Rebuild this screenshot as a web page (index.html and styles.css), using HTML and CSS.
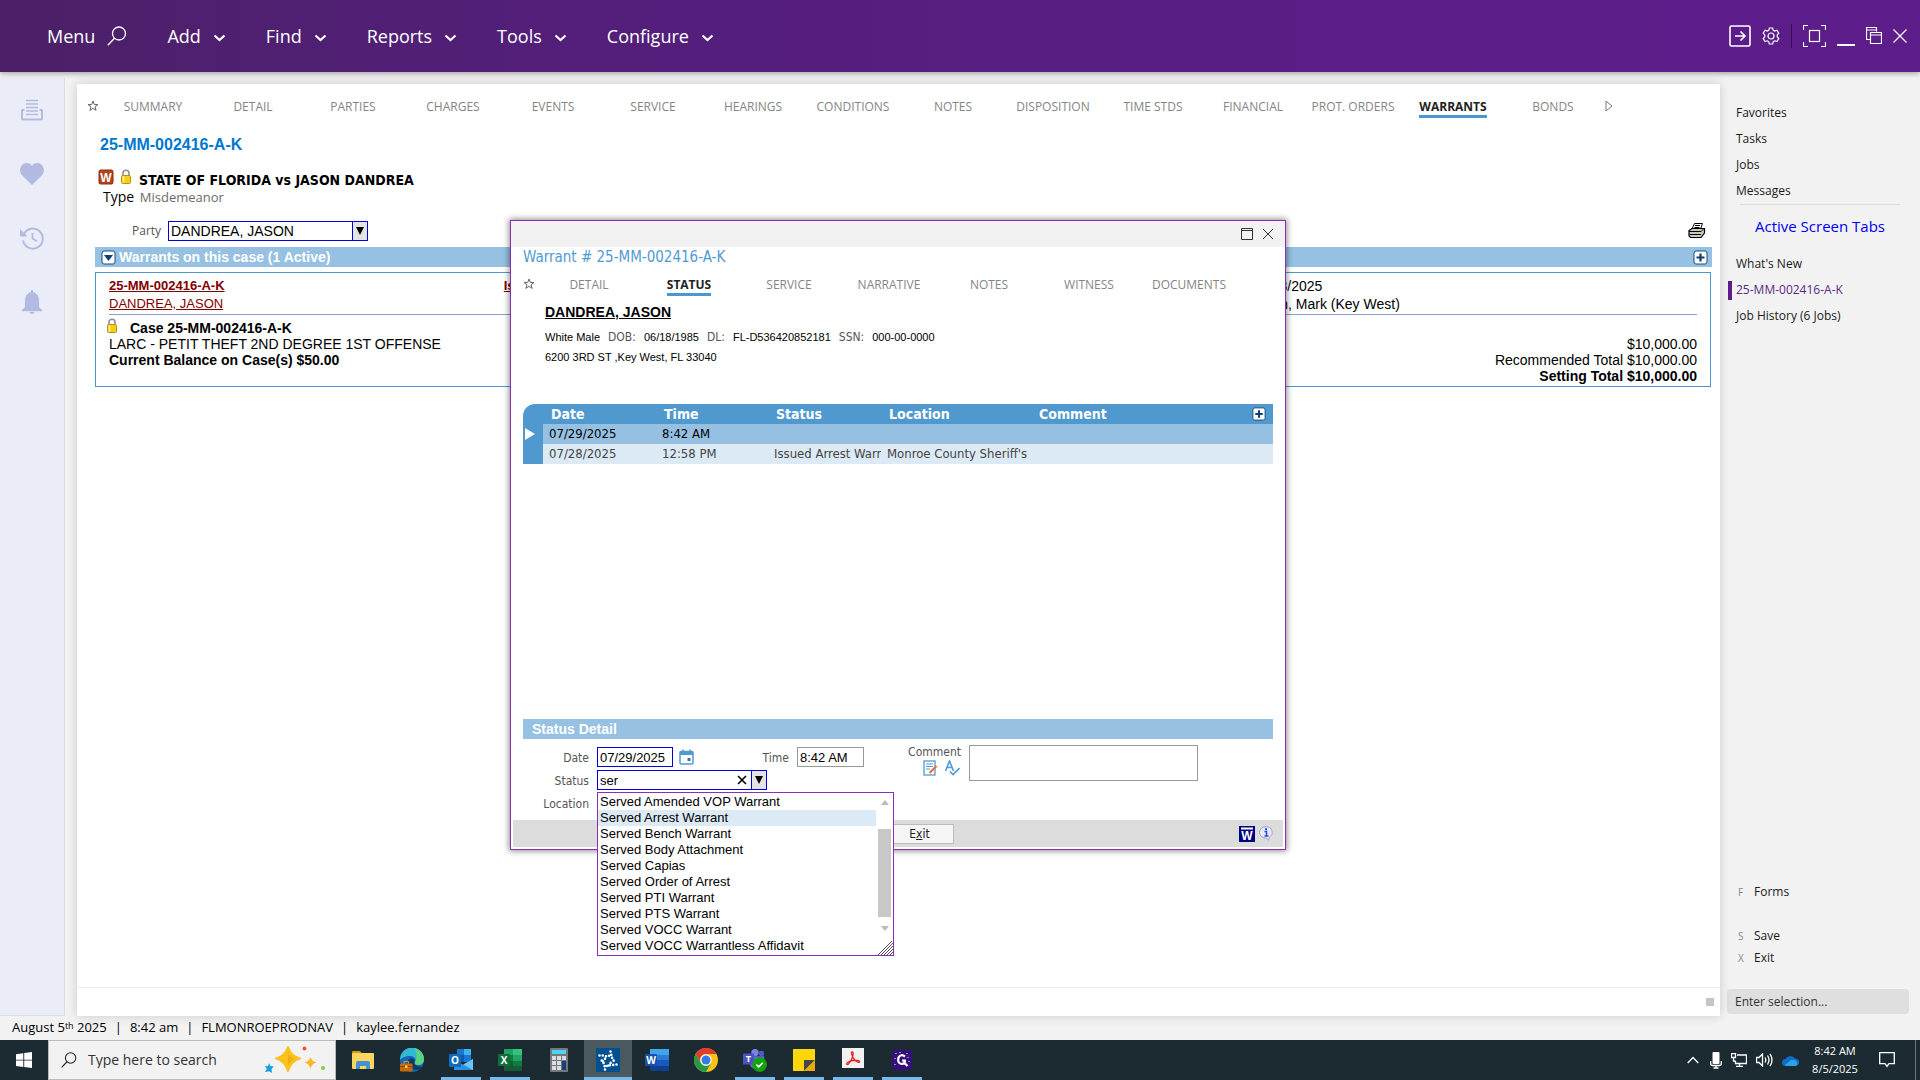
FILE: index.html
```html
<!DOCTYPE html>
<html lang="en">
<head>
<meta charset="utf-8">
<title>25-MM-002416-A-K</title>
<link rel="stylesheet" href="styles.css">
</head>
<body>
<svg class="defs" aria-hidden="true">
  <symbol id="chevron" viewBox="0 0 13 8"><path d="M1.5 1.5l5 4.500 5-4.500" fill="none" stroke="currentColor" stroke-width="2.200"/></symbol>
  <symbol id="glass" viewBox="0 0 20 20"><circle cx="12" cy="7.500" r="6.500" fill="none" stroke="currentColor" stroke-width="1.300"/><path d="M7.500 12.200L.8 19.200" stroke="currentColor" stroke-width="1.400"/></symbol>
  <symbol id="star" viewBox="0 0 12 12"><path d="M6 1l1.300 3.500 3.600.1-2.900 2.200 1.100 3.600L6 8.300l-3.100 2.100L4 6.800 1.100 4.600l3.600-.1z" fill="none" stroke="#666"/></symbol>
  <symbol id="lock" viewBox="0 0 12 15"><path d="M3 8V4.200a3 3 0 0 1 6 0V8" fill="none" stroke="#8a8f96" stroke-width="1.600"/><rect x="1.500" y="6.500" width="9" height="8" rx="1" fill="#f3cf1c" stroke="#b8920c"/><path d="M3.500 7.500v6" stroke="#fff6a8" stroke-width="1.500"/></symbol>
  <symbol id="plus" viewBox="0 0 15 15"><rect x="1" y="1" width="13" height="13" rx="2" fill="#fff" stroke="#1d4f7c"/><path d="M7.500 3.500v8M3.500 7.500h8" stroke="#0d3f70" stroke-width="2.200"/></symbol>
</svg>

<header class="topbar">
  <nav class="menu" aria-label="Main">
    <button type="button">Menu <svg class="i-glass"><use href="#glass"/></svg></button>
    <button type="button">Add <svg class="i-chev"><use href="#chevron"/></svg></button>
    <button type="button">Find <svg class="i-chev"><use href="#chevron"/></svg></button>
    <button type="button">Reports <svg class="i-chev"><use href="#chevron"/></svg></button>
    <button type="button">Tools <svg class="i-chev"><use href="#chevron"/></svg></button>
    <button type="button">Configure <svg class="i-chev"><use href="#chevron"/></svg></button>
  </nav>
  <div class="window-tools">
    <button type="button" aria-label="Sign out"><svg width="22" height="22" viewBox="0 0 22 22"><rect x="1" y="1" width="20" height="20" rx="1.500" stroke-width="1.600"/><path d="M6 11h10M11.500 6.500L16 11l-4.500 4.500" stroke-width="1.600"/></svg></button>
    <button type="button" aria-label="Settings"><svg width="18" height="18" viewBox="0 0 18 18"><path d="M7.300 1h3.400l.5 2.300 1.500.8 2.200-.9 1.900 3-1.600 1.700v1.900l1.600 1.800-1.900 3-2.200-.8-1.500.8-.5 2.400H7.300l-.5-2.400-1.500-.8-2.200.8-1.900-3 1.600-1.800V7.900L1.200 6.200l1.900-3 2.200.9 1.500-.8z"/><circle cx="9" cy="9" r="3"/></svg></button>
    <span class="tool-rule"></span>
    <button type="button" aria-label="Focus"><svg width="23" height="22" viewBox="0 0 23 22"><path d="M.5 5V.5H5M18 .5h4.500V5M.5 17v4.500H5M18 21.500h4.500V17"/><rect x="6.500" y="5.500" width="10" height="11"/></svg></button>
    <button type="button" aria-label="Minimize"><svg width="18" height="22" viewBox="0 0 18 22"><path d="M0 20h18" stroke-width="2"/></svg></button>
    <button type="button" aria-label="Restore"><svg width="16" height="18" viewBox="0 0 16 18"><path d="M4.500 12.500h-4V.5h10v4M.5 3h10M4.500 5.500h11v11h-11zM4.500 8h11"/></svg></button>
    <button type="button" aria-label="Close"><svg width="14" height="14" viewBox="0 0 14 14"><path d="M.5.5l13 13M13.500.5l-13 13"/></svg></button>
  </div>
</header>

<div class="shell">
  <nav class="rail" aria-label="Shortcuts">
    <button type="button" aria-label="Queue"><svg width="22" height="22" viewBox="0 0 22 22"><path d="M5 1.500h12M5 5h12M5 8.500h12M5 12h12M5 15.500h12" stroke-width="1.700"/><path d="M1 10.500V19q0 1.500 1.500 1.500h17Q21 20.500 21 19v-8.500M1 11h2.500M21 11h-2.500" stroke-width="2"/></svg></button>
    <button type="button" aria-label="Favorites"><svg width="24" height="22" viewBox="0 0 24 22"><path class="fill" d="M12 22L2.200 12.500C-2.500 7 1.500 0 6.600 0 9 0 11 1.200 12 3c1-1.800 3-3 5.400-3C22.500 0 26.500 7 21.800 12.500z"/></svg></button>
    <button type="button" aria-label="History"><svg width="24" height="24" viewBox="0 0 24 24"><path d="M3.700 8.500A10 10 0 1 1 3 14.500" stroke-width="2"/><path class="fill" d="M0 3v7.500h7.500z"/><path d="M12.500 7v5.500l4.500 2.700" stroke-width="1.800"/></svg></button>
    <button type="button" aria-label="Notifications"><svg width="22" height="24" viewBox="0 0 22 24"><path class="fill" d="M10 0h2v2.300c4 .6 6 4 6 8V17l3 3v1.200H1V20l3-3v-6.700c0-4 2-7.400 6-8zM8.500 22h5a2.500 2 0 0 1-5 0z"/></svg></button>
  </nav>

  <main class="card">
    <nav class="tabs" aria-label="Case">
      <svg class="i-star"><use href="#star"/></svg>
      <ul>
        <li><a href="#">SUMMARY</a></li><li><a href="#">DETAIL</a></li><li><a href="#">PARTIES</a></li><li><a href="#">CHARGES</a></li><li><a href="#">EVENTS</a></li><li><a href="#">SERVICE</a></li><li><a href="#">HEARINGS</a></li><li><a href="#">CONDITIONS</a></li><li><a href="#">NOTES</a></li><li><a href="#">DISPOSITION</a></li><li><a href="#">TIME STDS</a></li><li><a href="#">FINANCIAL</a></li><li><a href="#">PROT. ORDERS</a></li><li><a href="#" class="current">WARRANTS</a></li><li><a href="#">BONDS</a></li>
      </ul>
      <button type="button" aria-label="More tabs"><svg width="8" height="12" viewBox="0 0 8 12"><path d="M1 1v10l6-5z" fill="none" stroke="#777"/></svg></button>
    </nav>

    <div class="case">
      <h1>25-MM-002416-A-K</h1>
      <div class="style-line">
        <svg width="16" height="16" viewBox="0 0 16 16"><rect x="1" y="1" width="14" height="14" rx="1.500" fill="#b3431a" stroke="#8a2f10"/><text x="8" y="12.500" text-anchor="middle" class="t-icon">W</text></svg>
        <svg width="12" height="15"><use href="#lock"/></svg>
        <h2>STATE OF FLORIDA vs JASON DANDREA</h2>
      </div>
      <p class="type">Type <span>Misdemeanor</span></p>
      <div class="party">
        <label for="party">Party</label>
        <div class="select-box">
          <select id="party"><option>DANDREA, JASON</option></select>
          <span class="drop-arrow" aria-hidden="true"></span>
        </div>
        <button type="button" class="print" aria-label="Print"><svg width="18" height="16" viewBox="0 0 18 16"><path d="M4 6l2.500-5.500h8L12.500 6" fill="#fff" stroke="#000"/><path d="M7 2.500h5M6.500 4.500h5" stroke="#000"/><path d="M1 7.500l3-2h12.500v4.500l-3.500 4.500H2.500L1 13z" fill="#c8c8c8" stroke="#000" stroke-width="1.200"/><path d="M1 8.500h12l3-3M1.500 11.500H13" fill="none" stroke="#000"/><path d="M8 10h3" stroke="#e8d800"/></svg></button>
      </div>

      <section>
        <div class="section-bar">
          <button type="button" aria-label="Collapse"><svg width="15" height="15" viewBox="0 0 15 15"><rect x="1" y="1" width="13" height="13" rx="2" fill="#fff" stroke="#1d4f7c"/><path d="M3 5h9l-4.500 6z" fill="#0d3f70"/></svg></button>
          <h3>Warrants on this case (1 Active)</h3>
          <button type="button" aria-label="Add warrant"><svg width="15" height="15"><use href="#plus"/></svg></button>
        </div>
        <div class="warrant">
          <div class="warrant-head">
            <div><a href="#"><b>25-MM-002416-A-K</b></a><br><a href="#">DANDREA, JASON</a></div>
            <div><a href="#"><b>Issued</b></a></div>
            <div class="issued"><p>07/28/2025</p><p class="judge">n, Mark (Key West)</p></div>
          </div>
          <div class="warrant-body">
            <div>
              <div class="case-line"><svg width="12" height="15"><use href="#lock"/></svg><b>Case 25-MM-002416-A-K</b></div>
              <div>LARC - PETIT THEFT 2ND DEGREE 1ST OFFENSE</div>
              <div><b>Current Balance on Case(s) $50.00</b></div>
            </div>
            <div class="totals">
              <div>$10,000.00</div>
              <div>Recommended Total $10,000.00</div>
              <div><b>Setting Total $10,000.00</b></div>
            </div>
          </div>
        </div>
      </section>
    </div>
    <div class="card-foot"><span class="grip"></span></div>

    <div class="dialog" role="dialog" aria-labelledby="dlg-title">
      <div class="dialog-bar">
        <button type="button" aria-label="Maximize"><svg width="12" height="12" viewBox="0 0 12 12"><path d="M.5.500h11v11H.5zM.5 2.500h11"/></svg></button>
        <button type="button" aria-label="Close"><svg width="12" height="12" viewBox="0 0 12 12"><path d="M1 1l10 10M11 1L1 11"/></svg></button>
      </div>
      <div class="dialog-body">
        <h2 id="dlg-title">Warrant # 25-MM-002416-A-K</h2>
        <nav class="tabs dialog-tabs" aria-label="Warrant">
          <svg class="i-star"><use href="#star"/></svg>
          <ul><li><a href="#">DETAIL</a></li><li><a href="#" class="current">STATUS</a></li><li><a href="#">SERVICE</a></li><li><a href="#">NARRATIVE</a></li><li><a href="#">NOTES</a></li><li><a href="#">WITNESS</a></li><li><a href="#">DOCUMENTS</a></li></ul>
        </nav>
        <div class="person">
          <p class="name"><a href="#">DANDREA, JASON</a></p>
          <p class="facts"><span>White Male</span> <i>DOB:</i> <span>06/18/1985</span> <i>DL:</i> <span>FL-D536420852181</span> <i>SSN:</i> <span>000-00-0000</span></p>
          <p class="address">6200 3RD ST ,Key West, FL 33040</p>
        </div>
        <div class="grid-area">
          <table>
            <colgroup><col class="c-sel"><col class="c-date"><col class="c-time"><col class="c-stat"><col class="c-loc"><col></colgroup>
            <thead><tr><th></th><th>Date</th><th>Time</th><th>Status</th><th>Location</th><th><div class="last-head">Comment <button type="button" aria-label="Add status"><svg width="14" height="14"><use href="#plus"/></svg></button></div></th></tr></thead>
            <tbody>
              <tr class="selected"><td><svg width="10" height="14" viewBox="0 0 10 14"><path d="M0 1l10 6-10 6z" fill="#fff"/></svg></td><td>07/29/2025</td><td>8:42 AM</td><td></td><td></td><td></td></tr>
              <tr><td></td><td>07/28/2025</td><td>12:58 PM</td><td>Issued Arrest Warrant</td><td>Monroe County Sheriff's Office</td><td></td></tr>
            </tbody>
          </table>
        </div>
        <h3 class="detail-bar">Status Detail</h3>
        <form class="detail">
          <div class="fields">
            <div class="row">
              <label for="date">Date</label>
              <input id="date" class="required w-date" value="07/29/2025">
              <button type="button" aria-label="Pick date" class="cal"><svg width="15" height="16" viewBox="0 0 15 16"><path d="M1 3.500q0-1 1-1h11q1 0 1 1V14q0 1-1 1H2q-1 0-1-1zM4 .5V3M11 .5V3" fill="#fff" stroke="#4f9bd3" stroke-width="1.500"/><path d="M1 3h13v3H1z" fill="#4f9bd3"/><path d="M8.500 9h3v3h-3z" fill="#2d78b5"/></svg></button>
              <label for="time" class="time-label">Time</label>
              <input id="time" class="w-time" value="8:42 AM">
            </div>
            <div class="row">
              <label for="status">Status</label>
              <div class="combo">
                <input id="status" value="ser" role="combobox" aria-expanded="true" aria-controls="status-list">
                <button type="button" class="clear" aria-label="Clear"><svg width="10" height="10" viewBox="0 0 10 10"><path d="M1 1l8 8M9 1L1 9" stroke="#000" stroke-width="1.600"/></svg></button>
                <button type="button" class="drop-arrow" aria-label="Open list"></button>
                <div class="list-box">
                  <ul id="status-list" role="listbox">
                    <li role="option">Served Amended VOP Warrant</li>
                    <li role="option" aria-selected="true">Served Arrest Warrant</li>
                    <li role="option">Served Bench Warrant</li>
                    <li role="option">Served Body Attachment</li>
                    <li role="option">Served Capias</li>
                    <li role="option">Served Order of Arrest</li>
                    <li role="option">Served PTI Warrant</li>
                    <li role="option">Served PTS Warrant</li>
                    <li role="option">Served VOCC Warrant</li>
                    <li role="option">Served VOCC Warrantless Affidavit</li>
                  </ul>
                  <div class="scroll">
                    <span class="up"></span><span class="thumb"></span><span class="down"></span>
                    <svg width="15" height="14" viewBox="0 0 15 14"><path d="M0 14L14 0M3 14L15 2M6 14l9-9M9 14l6-6M12 14l3-3" stroke="#555"/></svg>
                  </div>
                </div>
              </div>
            </div>
            <div class="row"><label>Location</label></div>
          </div>
          <div class="comment-side">
            <label for="comment">Comment</label>
            <div class="comment-icons">
              <svg width="15" height="16" viewBox="0 0 15 16"><rect x="1" y="1" width="11" height="14" fill="#fff" stroke="#4f9bd3" stroke-width="1.300"/><path d="M3 4h7M3 6.500h7M3 9h4" stroke="#4f9bd3"/><path d="M6.500 13L13.500 6" stroke="#e8702a" stroke-width="2.200"/></svg>
              <svg width="16" height="16" viewBox="0 0 16 16"><path d="M1.500 11L5.500 1l4 10M3 7.500h5M6 11.500l3 3L15.500 8" fill="none" stroke="#4f9bd3" stroke-width="1.600"/></svg>
            </div>
          </div>
          <textarea id="comment"></textarea>
        </form>
      </div>
      <div class="dialog-foot">
        <button type="button" class="exit">E<u>x</u>it</button>
        <div class="foot-icons">
          <svg width="16" height="16" viewBox="0 0 16 16"><rect width="16" height="16" fill="#000080"/><path d="M2 2.500h12" stroke="#fff" stroke-width="2"/><text x="8" y="14" text-anchor="middle" class="t-icon">W</text></svg>
          <svg width="14" height="15" viewBox="0 0 14 15"><path d="M7 .7a6 5.700 0 0 1 3.500 10.500L9.500 14.500 7.500 12A6 5.700 0 1 1 7 .7z" fill="#e9e9fa" stroke="#a3a3cc"/><path d="M5.500 5.500H7.500V10M5.500 10h4" fill="none" stroke="#1b4fd0" stroke-width="1.500"/><circle cx="7" cy="3.200" r="1.100" fill="#1b4fd0"/></svg>
        </div>
      </div>
    </div>
  </main>

  <aside class="side">
    <ul class="links">
      <li><a href="#">Favorites</a></li><li><a href="#">Tasks</a></li><li><a href="#">Jobs</a></li><li><a href="#">Messages</a></li>
    </ul>
    <h2>Active Screen Tabs</h2>
    <ul class="links">
      <li><a href="#">What's New</a></li><li class="on"><a href="#">25-MM-002416-A-K</a></li><li><a href="#">Job History (6 Jobs)</a></li>
    </ul>
    <ul class="actions">
      <li class="apart"><kbd>F</kbd><a href="#">Forms</a></li><li><kbd>S</kbd><a href="#">Save</a></li><li><kbd>X</kbd><a href="#">Exit</a></li>
    </ul>
    <input class="selection" placeholder="Enter selection..." aria-label="Enter selection">
  </aside>
</div>

<footer class="statusline"><span>August 5<sup>th</sup> 2025</span><span>|</span><span>8:42 am</span><span>|</span><span>FLMONROEPRODNAV</span><span>|</span><span>kaylee.fernandez</span></footer>

<div class="taskbar">
  <button type="button" class="start" aria-label="Start"><svg width="16" height="16" viewBox="0 0 16 16"><path d="M0 2.200L7.300 1.200v6.500H0zM8.200 1L16 0v7.700H8.200zM0 8.500h7.300V15L0 14zM8.200 8.500H16V16l-7.800-1z" fill="#fff"/></svg></button>
  <div class="search">
    <svg class="s-glass"><use href="#glass"/></svg>
    <input placeholder="Type here to search" aria-label="Type here to search">
    <svg width="62" height="28" viewBox="0 0 62 28"><path d="M24 1q3 9 12 11.500Q27 15 24 25q-3-10-12-12.500Q21 10 24 1z" fill="#fbc21c" stroke="#fbc21c" stroke-width="2" stroke-linejoin="round"/><path d="M24 6q1 6 7 6.500Q26 14 24 20z" fill="#eeb010"/><path d="M46.500 11q1.500 4.500 6 5.500-4.500 1-6 6-1.500-5-6-6 4.500-1 6-5.500z" fill="#fbb62a"/><path d="M5 17l1.500 3 3.300.5-2.300 2.500.5 4-3-1.700-4 1 1.800-3.500L1 20l3 .3z" fill="#1b9de2"/><circle cx="40.500" cy="2.500" r="2" fill="#ef5a2b"/><circle cx="59" cy="22" r="2" fill="#86c940"/></svg>
  </div>
  <div class="apps">
    <button type="button" aria-label="File Explorer"><svg viewBox="0 0 24 24"><path d="M1 4q0-1 1-1h7l2 2.500H1z" fill="#d99a0c"/><rect x="1" y="5" width="22" height="16" rx="1" fill="#ffd561"/><path d="M5 21v-6q0-2 2-2h10q2 0 2 2v6h-4v-3H9v3z" fill="#3f93d6"/></svg></button>
    <button type="button" aria-label="Edge"><svg viewBox="0 0 24 24"><circle cx="12" cy="12" r="12" fill="#1467b8"/><path d="M0 12A12 12 0 0 1 24 11c0 4-3 6-6 6-3 0-5-1-3-3 2-3-1-6-5-6S1 10 0 12z" fill="#31b9d3"/><path d="M14 0q10 3 10 11c0 4-3 6-6 6-3 0-4-1-3-3 3-5 2-10-1-14z" fill="#5bd47b"/><path d="M7.500 15q0-4 4-5 4 1 3 4-1 4 8 5-3 3-6 3-8 0-9-7z" fill="#123a66"/><rect y="15.500" width="12.500" height="8" rx="1" fill="#c76a06"/><path d="M0 18.500h12.500" stroke="#8d4302"/><path d="M4 15.500v-2h4.500v2" fill="none" stroke="#e6932c"/><rect x="5" y="17.500" width="2.500" height="2.500" fill="#ffd25a"/></svg></button>
    <button type="button" aria-label="Outlook" class="open"><svg viewBox="0 0 24 24"><path d="M8 1h14v13H8z" fill="#1a77cf"/><path d="M15 1h7v6h-7z" fill="#3eb5f0"/><path d="M8 7h7v7H8z" fill="#0f5aa8"/><path d="M5 12l10 5 9-6v11H5z" fill="#2a93e0"/><path d="M24 11v11L14 16.500z" fill="#6cc3f4"/><rect y="6" width="12" height="13" rx="1" fill="#0f6cbd"/><text x="6" y="16" text-anchor="middle" class="t-app">O</text></svg></button>
    <button type="button" aria-label="Excel" class="open"><svg viewBox="0 0 24 24"><rect x="6" y="1" width="18" height="22" rx="1" fill="#185c37"/><path d="M6 1h9v6H6z" fill="#21a366"/><path d="M15 1h9v6h-9z" fill="#33c481"/><path d="M15 7h9v6h-9z" fill="#21a366"/><path d="M6 7h9v6H6zM15 13h9v5h-9z" fill="#107c41"/><rect y="6" width="12" height="12" rx="1" fill="#0e7038"/><text x="6" y="15.500" text-anchor="middle" class="t-app">X</text></svg></button>
    <button type="button" aria-label="Calculator"><svg viewBox="0 0 24 24"><rect x="3" width="18" height="24" rx="1" fill="#74787c"/><rect x="5" y="2" width="14" height="4" fill="#4bd4f4"/><path d="M5 8h4v4H5zM10 8h4v4h-4zM15 8h4v4h-4zM5 13h4v4H5zM10 13h4v4h-4zM5 18h4v4H5zM10 18h4v4h-4z" fill="#d9dcde"/><rect x="15" y="13" width="4" height="9" fill="#15407c"/></svg></button>
    <button type="button" aria-label="Case navigator" class="open active"><svg viewBox="0 0 24 24"><rect width="24" height="24" fill="#00508f"/><path d="M14.500 3.500l1 4 1 4 3 3M3.500 7.500h3.500l4 1 4-1.500M9 21.500l-.5-4-1.500-4L3.500 11M20.500 16.500l-4 .5-4 .5-3.500 1M7 13.500l3-4M12.500 17.500l4-5" fill="none" stroke="#fff" stroke-width="2.600" stroke-linecap="round" stroke-dasharray="0 3.300"/></svg></button>
    <button type="button" aria-label="Word"><svg viewBox="0 0 24 24"><rect x="5" y="1" width="19" height="22" rx="1" fill="#103f91"/><path d="M5 1h19v6H5z" fill="#41a5ee"/><path d="M5 7h19v5H5z" fill="#2b7cd3"/><path d="M5 12h19v6H5z" fill="#185abd"/><rect y="6" width="12" height="12" rx="1" fill="#1651ad"/><text x="6" y="15.500" text-anchor="middle" class="t-app">W</text></svg></button>
    <button type="button" aria-label="Chrome"><svg viewBox="0 0 24 24"><circle cx="12" cy="12" r="12" fill="#fbc116"/><path d="M1.600 6A12 12 0 0 1 22.400 6H12a6 6 0 0 0-5.200 9z" fill="#e33b2e"/><path d="M1.600 6A12 12 0 0 0 12 24l5.200-9A6 6 0 0 1 6.800 15z" fill="#229a48"/><circle cx="12" cy="12" r="5.700" fill="#fff"/><circle cx="12" cy="12" r="4.500" fill="#2f7de9"/></svg></button>
    <button type="button" aria-label="Teams" class="open"><svg viewBox="0 0 26 26"><circle cx="13" cy="5" r="4" fill="#7b83eb"/><circle cx="20" cy="6" r="3" fill="#5059c9"/><path d="M7 9h16v8q-2 6-8 6-8 0-8-8z" fill="#6169d6"/><rect y="6" width="12" height="12" rx="1" fill="#4b53bc"/><text x="6" y="15.500" text-anchor="middle" class="t-app">T</text><circle cx="18" cy="18" r="8" fill="#13a10e"/><path d="M14.500 18l2.500 2.500 4.500-4.500" fill="none" stroke="#fff" stroke-width="1.800"/></svg></button>
    <button type="button" aria-label="Sticky Notes" class="open"><svg viewBox="0 0 24 24"><path d="M1 1h22v22H1z" fill="#ffd60a"/><path d="M12 12h11L12 23z" fill="#454545"/><path d="M23 12v11H12z" fill="#e9a90b"/></svg></button>
    <button type="button" aria-label="Acrobat" class="open"><svg viewBox="0 0 24 24"><path d="M1 0h22v20H1z" fill="#f2f2f2"/><path d="M10.500 4c2-1 2 2 1 5-1 3-4 8-5.500 7.500-1.500-1 2-3.500 6-4 3.500-.5 7 0 6.500 1.500-.6 1.500-4-1-5.500-3-1.500-2-3-6-2.500-7z" fill="none" stroke="#e32626" stroke-width="1.300"/></svg></button>
    <button type="button" aria-label="Capture" class="open"><svg viewBox="0 0 24 24"><rect x="2" y="2" width="20" height="20" rx="4" fill="#341078"/><path d="M15 8.500q-4-3-6.500 1Q7 15 11.500 16q3.500 0 3.500-3.500h-3M14.500 15l3 3" fill="none" stroke="#fff" stroke-width="2.200"/><path d="M6 5v1M10 4v1M17 5v1M5 10v1M18 9v1M5 16v1M19 13v1" stroke="#d9c9ff" stroke-width="1.200"/></svg></button>
  </div>
  <div class="tray">
    <svg width="12" height="8" viewBox="0 0 12 8"><path d="M.7 7L6 1.500 11.300 7"/></svg>
    <svg width="12" height="17" viewBox="0 0 12 17"><rect x="2.500" y="0" width="7" height="12" rx="1" fill="#fff" stroke="none"/><path d="M.7 9v2.500q0 2 2 2h6.600q2 0 2-2V9M6 13.500v2.500M3.500 16h5"/></svg>
    <svg width="16" height="14" viewBox="0 0 16 14"><path d="M6 2h9.500v8.500h-11V8M.5.500h4v4h-4zM2.500 4.500V8h2M8.500 10.500v3M5 13.500h7"/></svg>
    <svg width="17" height="14" viewBox="0 0 17 14"><path d="M.5 4.500H3L6.500 1v12L3 9.500H.5zM9 4.500q1.500 2.500 0 5M11.500 2.500q3 4.500 0 9M14 .8q4 6.200 0 12.400"/></svg>
    <svg width="17" height="11" viewBox="0 0 17 11"><path d="M3.500 11a3.500 3.500 0 0 1 0-7A5.500 5 0 0 1 13 3.500a3.700 3.700 0 0 1 .5 7.500z" fill="#0f6fc6" stroke="none"/><path d="M4 11l-1-1 6-5q4-.5 5 1a3 3 0 0 1 0 5z" fill="#2aa3ea" stroke="none"/></svg>
    <div class="clock">8:42 AM<br>8/5/2025</div>
    <svg width="16" height="16" viewBox="0 0 16 16"><path d="M.7.700h14.600v11H10L8 14.500l-2-2.800H.7z"/></svg>
    <span class="desk-rule"></span>
  </div>
</div>
</body>
</html>
```

FILE: styles.css
```css
* { box-sizing: border-box; margin: 0; padding: 0; }
html { height: 100%; }
body {
  --ui: "Open Sans", "Noto Sans", sans-serif;
  --narrow: "DejaVu Sans Condensed", "Open Sans", sans-serif;
  --arial: "Liberation Sans", Arial, sans-serif;
  min-height: 100%;
  display: flex;
  flex-direction: column;
  background: #f2f2f2;
  font: 12px/16px var(--ui);
  color: #222;
}
ul { list-style: none; }
a { color: inherit; text-decoration: none; }
button { border: 0; background: none; font: inherit; color: inherit; display: flex; align-items: center; cursor: pointer; }
input, select, textarea { font: inherit; color: inherit; outline: 0; border-radius: 0; }
svg { display: block; flex: none; }
.defs { position: absolute; width: 0; height: 0; }
.t-icon { font: bold 12px var(--arial); fill: #fff; }
.t-app { font: bold 10px var(--ui); fill: #fff; }

/* Top bar */
.topbar {
  height: 72px;
  flex: none;
  display: flex;
  align-items: center;
  justify-content: space-between;
  padding: 0 13px 0 47px;
  background: linear-gradient(90deg, #4b2067, #521f78 25%, #5a1e86 70%, #5d1d8b);
  color: #fff;
  box-shadow: 0 1px 6px rgba(0, 0, 0, .4);
  position: relative;
  z-index: 1;
}
.menu { display: flex; gap: 40px; }
.menu button { gap: 12px; font-size: 18px; line-height: 24px; }
.i-glass { width: 20px; height: 20px; }
.i-chev { width: 13px; height: 8px; margin-top: 4px; }
.window-tools { display: flex; align-items: center; gap: 11px; height: 24px; }
.window-tools svg { fill: none; stroke: #fff; stroke-width: 1.2; }
.tool-rule { width: 1px; height: 24px; background: #32104e; }

/* Layout */
.shell { flex: 1; display: flex; min-height: 0; padding-top: 6px; }
.rail {
  width: 65px;
  flex: none;
  background: #eaedf8;
  border: solid #dcdde4;
  border-width: 0 1px 1px 0;
  padding-top: 12px;
  display: flex;
  flex-direction: column;
  align-items: center;
  gap: 24px;
}
.rail button { height: 40px; }
.rail svg { fill: none; stroke: #b3bae1; }
.rail .fill { fill: #b3bae1; stroke: none; }
.card {
  flex: 1;
  min-width: 0;
  margin: 6px 0 0 12px;
  background: #fff;
  box-shadow: 0 0 10px rgba(0, 0, 0, .16);
  display: flex;
  flex-direction: column;
  position: relative;
}
.side { width: 200px; flex: none; display: flex; flex-direction: column; padding: 22px 11px 2px 7px; }

/* Tabs */
.tabs { display: flex; align-items: center; height: 44px; padding-left: 10px; color: #858585; }
.tabs ul { display: grid; grid-auto-flow: column; grid-auto-columns: 100px; margin-left: 4px; }
.tabs li { display: flex; justify-content: center; white-space: nowrap; }
.tabs a { padding-top: 5px; border-bottom: 3px solid transparent; }
.tabs .current { color: #222; font-weight: bold; border-color: #4b98d0; }
.tabs button { margin-left: 2px; }
.i-star { width: 12px; height: 12px; }

/* Case panel */
.case { flex: 1; padding: 7px 8px 0 18px; font-family: var(--arial); font-size: 14px; color: #000; }
.case h1 { font-size: 16px; line-height: 20px; padding-left: 5px; color: #0078d0; }
.style-line { display: flex; gap: 6px; padding: 14px 0 0 3px; height: 34px; }
.style-line h2 { font: bold 14px/18px var(--narrow); padding: 2px 0 0 1px; }
.type { font: 14px/16px var(--ui); padding-left: 8px; }
.type span { font-size: 13px; color: #6b6b6b; margin-left: 2px; }
.party { display: flex; align-items: center; margin-top: 16px; padding: 0 6px 0 37px; height: 20px; }
.party label { font: 12px/16px var(--ui); color: #555; width: 29px; margin-right: 7px; }
.select-box { display: flex; width: 200px; height: 20px; border: 1px solid #0000e0; }
.select-box select { flex: 1; appearance: none; border: 0; background: #fff; padding-left: 2px; color: #000; }
.drop-arrow { width: 15px; flex: none; border-left: 1px solid #0000e0; background: #e4e4e4; display: flex; justify-content: center; align-items: center; }
.drop-arrow::before { content: ""; border: solid transparent; border-width: 8px 4px 0; border-top-color: #000; }
.print { margin-left: auto; }
.section-bar { margin-top: 6px; height: 20px; display: flex; align-items: center; padding: 0 4px 0 6px; background: #96c1e2; }
.section-bar h3 { flex: 1; margin-left: 3px; font-size: 14px; color: #fff; }
.warrant { margin: 5px 1px 0 0; border: 1px solid #4b98d0; padding: 4px 13px 2px; }
.warrant-head { display: grid; grid-template-columns: 395fr 749fr 445fr; font-size: 13px; line-height: 18px; padding-bottom: 1px; border-bottom: 1px solid #8f9fc4; }
.warrant-head a { color: #800000; text-decoration: underline; }
.issued { font-size: 14px; }
.judge { padding-left: 28px; }
.warrant-body { display: flex; justify-content: space-between; align-items: flex-end; padding-top: 5px; line-height: 16px; }
.warrant-body > div:first-child { padding-bottom: 16px; }
.case-line { display: flex; gap: 12px; margin-left: -3px; height: 16px; }
.case-line svg { margin-top: -2px; }
.totals { text-align: right; }
.card-foot { height: 29px; border-top: 1px solid #eee; display: flex; justify-content: flex-end; align-items: center; padding-right: 6px; }
.grip { width: 8px; height: 8px; background: #c6c6c6; }

/* Warrant dialog, floats over the case panel */
.dialog {
  position: absolute;
  left: 433px;
  top: 136px;
  width: 776px;
  background: #fff;
  border: 1px solid #8a2fb5;
  box-shadow: 0 0 6px 1px rgba(0, 0, 0, .45);
  padding-bottom: 2px;
}
.dialog-bar { height: 26px; background: #f2f2f2; display: flex; justify-content: flex-end; align-items: center; gap: 9px; padding-right: 11px; }
.dialog-bar svg { fill: none; stroke: #333; }
.dialog-body { padding: 0 12px; }
.dialog h2 { font: 15px/20px var(--narrow); color: #4f9bd3; }
.dialog-tabs { height: 34px; padding-left: 0; }
.dialog-tabs ul { margin-left: 4px; }
.person { padding: 2px 0 38px 22px; font: 11px/18px var(--arial); color: #000; }
.name { font-size: 14px; font-weight: bold; }
.name a { text-decoration: underline; }
.facts { display: flex; gap: 8px; padding: 7px 0 2px; }
.facts i { font: 12px/18px var(--narrow); color: #555; }
.grid-area { min-height: 315px; }
table { width: 100%; border-collapse: collapse; table-layout: fixed; font: 13px/20px var(--narrow); color: #444; border-top-left-radius: 12px; overflow: hidden; }
.c-sel { width: 20px; }
.c-date, .c-stat { width: 113px; }
.c-time { width: 112px; }
.c-loc { width: 150px; }
thead { background: #4f99cf; color: #fff; font-size: 14px; }
th, td { height: 20px; text-align: left; padding-left: 6px; overflow: hidden; white-space: nowrap; }
th { padding-left: 8px; }
td:first-child { background: #4f99cf; padding-left: 2px; }
tbody tr { background: #dceaf5; }
tbody .selected { background: #95c0e2; color: #000; }
.last-head { display: flex; justify-content: space-between; align-items: center; padding-right: 7px; }
.detail-bar { height: 20px; font: bold 14px/20px var(--arial); color: #fff; background: #96c1e2; padding-left: 9px; }
.detail { display: flex; height: 81px; }
.detail label { color: #555; font: 12px/16px var(--narrow); text-align: right; }
.fields { display: flex; flex-direction: column; gap: 3px; padding-top: 8px; width: 341px; }
.row { display: flex; align-items: center; height: 20px; }
.row label { width: 66px; margin-right: 8px; padding-top: 1px; }
.row .time-label { width: 86px; }
.row input { height: 20px; border: 1px solid #999; padding: 0 2px; font: 13px/16px var(--arial); color: #000; min-width: 0; }
.row .required { border-color: #0000e0; }
.w-date { width: 76px; }
.w-time { width: 67px; }
.cal { margin: 0 9px 0 6px; }
.combo { position: relative; display: flex; align-items: center; width: 170px; height: 20px; border: 1px solid #0000e0; }
.combo input { flex: 1; border: 0; height: 18px; }
.clear { margin-right: 4px; }
.combo .drop-arrow { height: 18px; }
.list-box { position: absolute; left: -1px; top: 21px; z-index: 2; width: 297px; display: flex; background: #fff; border: 1px solid #8a2fb5; padding-top: 1px; color: #000; }
.list-box ul { flex: 1; padding-bottom: 1px; font: 13px/16px var(--arial); }
.list-box li { padding-left: 2px; }
.list-box [aria-selected] { background: #dceaf5; }
.scroll { width: 17px; display: flex; flex-direction: column; align-items: center; justify-content: space-between; padding-top: 6px; }
.scroll .up { border: solid transparent; border-width: 0 4px 5px; border-bottom-color: #bbb; }
.scroll .down { border: solid transparent; border-width: 5px 4px 0; border-top-color: #bbb; }
.scroll .thumb { width: 13px; height: 88px; margin-top: 14px; background: #c8c8c8; }
.scroll svg { align-self: flex-end; }
.comment-side { width: 97px; padding-top: 5px; display: flex; flex-direction: column; align-items: flex-end; }
.comment-icons { display: flex; gap: 6px; padding-right: 1px; }
textarea { width: 229px; height: 36px; margin: 6px 0 0 8px; border: 1px solid #999; resize: none; }
.dialog-foot { height: 27px; margin: 0 2px; padding: 0 10px 0 372px; background: #dcdcdc; display: flex; align-items: center; justify-content: space-between; }
.exit { width: 69px; height: 20px; justify-content: center; background: #f5f5f5; border: 1px solid #bbb; font: 12px/16px var(--narrow); }
.foot-icons { display: flex; gap: 4px; }

/* Right column */
.links { font-size: 12px; line-height: 26px; color: #1a1a1a; }
.links li { padding-left: 9px; }
.links .on { color: #5b2a86; background: linear-gradient(#5b1e8c, #5b1e8c) 1px 4px / 4px 19px no-repeat; }
.side h2 { margin: 0 9px 0 13px; padding: 11px 0 15px; border-top: 1px solid #ddd; text-align: center; white-space: nowrap; font-size: 15px; font-weight: normal; line-height: 20px; color: #0000f0; }
.actions { margin-top: auto; padding-bottom: 20px; line-height: 22px; color: #1a1a1a; }
.actions li { display: flex; padding-left: 11px; }
.actions .apart { margin-bottom: 22px; }
kbd { width: 16px; font: 10px/22px var(--ui); color: #888; }
.selection { width: 100%; height: 25px; border: 0; border-radius: 4px; background: #dfdfdf; padding: 0 8px; font-size: 12px; }
::placeholder { color: #333; opacity: 1; }

/* Status line */
.statusline { height: 24px; flex: none; display: flex; align-items: center; gap: 8px; padding: 0 12px 2px; font-size: 13px; color: #000; }
sup { font-size: 9px; line-height: 8px; vertical-align: 3px; }

/* Taskbar */
.taskbar { height: 40px; flex: none; display: flex; background: #1b2b31; }
.start { width: 48px; justify-content: center; }
.search { width: 288px; display: flex; align-items: center; padding: 0 9px 0 12px; gap: 11px; background: #f2f2f2; border: 1px solid #bbb; }
.search input { flex: 1; min-width: 0; border: 0; background: none; font-size: 14px; }
.s-glass { width: 16px; height: 16px; }
.apps { display: flex; gap: 1px; margin-left: 3px; }
.apps button { width: 48px; height: 40px; justify-content: center; border-bottom: 3px solid transparent; padding-top: 3px; background: linear-gradient(#76b9ed, #76b9ed) 50% 40px / 40px 3px no-repeat; background-origin: border-box; background-clip: border-box; }
.apps svg { width: 24px; height: 24px; }
.apps .open { background-position: 50% 37px; }
.apps .active { background-color: #4a595e; border-bottom-color: #76b9ed; }
.tray { margin-left: auto; display: flex; align-items: center; gap: 9px; color: #fff; }
.tray svg { fill: none; stroke: #fff; stroke-width: 1.3; }
.tray svg:first-child { margin-right: 2px; }
.clock { width: 54px; text-align: center; font-size: 11px; line-height: 18px; margin-right: 8px; }
.desk-rule { width: 1px; height: 40px; background: #6c777b; margin: 0 4px 0 11px; }
```
